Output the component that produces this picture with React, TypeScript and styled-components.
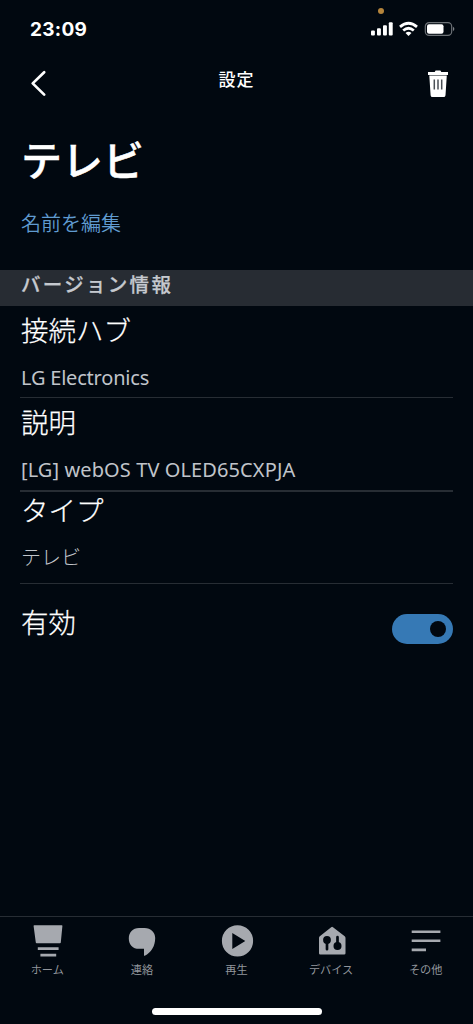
import React from "react";
import styled, { createGlobalStyle } from "styled-components";

const Global = createGlobalStyle`
  *, *::before, *::after { box-sizing: border-box; }
  html, body { margin: 0; background: #010810; }
  body { font-family: "Noto Sans CJK JP", "Noto Sans", sans-serif; color: #fff; }
`;

const Screen = styled.div`
  position: relative;
  display: flex;
  flex-direction: column;
  width: 473px;
  height: 1024px;
  overflow: hidden;
  background: #010810;
`;

const StatusBar = styled.div`
  display: flex;
  align-items: center;
  justify-content: space-between;
  height: 58px;
  padding: 0 18px 0 30px;
`;

const Clock = styled.span`
  padding-top: 2px;
  font: 700 19px/22px Inter, sans-serif;
  letter-spacing: 0.3px;
`;

const StatusIcons = styled.div`
  display: flex;
  align-items: center;
  height: 16px;
`;

const RecordingDot = styled.i`
  position: absolute;
  left: 378px;
  top: 8px;
  width: 6px;
  height: 6px;
  border-radius: 50%;
  background: #b5853c;
`;

const NavBar = styled.header`
  display: grid;
  grid-template-columns: 60px 1fr 60px;
  height: 62px;
`;

const NavButton = styled.button<{ $end?: boolean }>`
  display: flex;
  align-items: flex-start;
  justify-content: ${(p) => (p.$end ? "flex-end" : "flex-start")};
  padding: ${(p) => (p.$end ? "12px 24px 0 0" : "12px 0 0 30px")};
  border: 0;
  background: none;
`;

const NavTitle = styled.h2`
  margin: 0;
  padding-top: 10px;
  text-align: center;
  font-size: 17px;
  font-weight: 500;
  line-height: 22px;
  letter-spacing: 1px;
`;

const DeviceName = styled.h1`
  margin: 8px 0 0 21px;
  font-size: 41px;
  font-weight: 500;
  line-height: 60px;
  -webkit-text-stroke: 0.5px #fff;
`;

const EditLink = styled.a`
  margin: 21px 0 0 21px;
  font-size: 20px;
  font-weight: 350;
  line-height: 28px;
  color: #609bd0;
`;

const SectionHeader = styled.div`
  height: 36px;
  margin-top: 33px;
  padding-left: 21px;
  background: #272c33;
  color: #c5c9cf;
  font-size: 19.5px;
  font-weight: 500;
  line-height: 27px;
  letter-spacing: 2.3px;
  -webkit-text-stroke: 0.25px #c5c9cf;
`;

const Row = styled.div<{ $height: number; $top: number; $line?: number }>`
  height: ${(p) => p.$height}px;
  margin: 0 20px;
  padding: ${(p) => p.$top}px 0 0 1px;
  border-bottom: ${(p) => p.$line ?? 1}px solid #272d34;
`;

const Label = styled.div<{ $tight?: boolean }>`
  font-size: 27.5px;
  font-weight: 300;
  line-height: ${(p) => (p.$tight ? 34 : 36)}px;
  color: #fff;
  -webkit-text-stroke: 0.25px #fff;
`;

const Value = styled.div<{ $latin?: boolean; $tracking?: number }>`
  margin-top: 16px;
  font-family: ${(p) => (p.$latin ? '"Noto Sans", sans-serif' : '"Noto Sans CJK JP", sans-serif')};
  font-size: 20px;
  font-weight: ${(p) => (p.$latin ? 400 : 300)};
  letter-spacing: ${(p) => p.$tracking ?? 0}px;
  line-height: 30px;
  white-space: nowrap;
  color: #c0c4ca;
`;

const ToggleRow = styled.div`
  display: flex;
  justify-content: space-between;
  margin: 19px 20px 0 21px;
`;

const Toggle = styled.button`
  display: flex;
  align-items: center;
  justify-content: flex-end;
  width: 61px;
  height: 30px;
  margin-top: 11px;
  padding: 0 7px;
  border: 0;
  border-radius: 15px;
  background: #3679b5;
`;

const Knob = styled.span`
  width: 16px;
  height: 16px;
  border-radius: 50%;
  background: #010810;
`;

const TabBar = styled.nav`
  display: grid;
  grid-template-columns: repeat(5, 1fr);
  height: 92px;
  margin-top: auto;
  border-top: 1px solid #272d34;
`;

const Tab = styled.a`
  display: flex;
  flex-direction: column;
  align-items: center;
  padding-top: 7px;
  color: #a6a9af;

  svg {
    margin-left: 2px;
  }
`;

const TabLabel = styled.span`
  margin-top: 2px;
  font-size: 11.2px;
  font-weight: 400;
  line-height: 18px;
  color: #92969c;
`;

const HomeIndicator = styled.div`
  align-self: center;
  width: 170px;
  height: 7px;
  margin-bottom: 9px;
  border-radius: 4px;
  background: #fff;
`;

const tabs = [
  {
    name: "ホーム",
    art: <path d="M3.2 1.2h27.6q.7 0 .6.8l-1.6 16.600q-.1.700-.8.700H5.600q-.7 0-.8-.7L2.600 2q-.1-.8.600-.8zM6.800 23.200h20.800v2.700H6.800zM9.400 29.800h15.800v2.700H9.400z" />,
  },
  {
    name: "連絡",
    art: <path d="M14 3.900h5.500c6.500 0 10.700 4.300 10.700 10.200 0 8.200-4.200 14.800-10.400 17.600q-.8.300-.8-.5v-6.400h-5C7.800 24.800 3.800 20.600 3.800 14.400S7.800 3.900 14 3.900z" />,
  },
  {
    name: "再生",
    art: <path fillRule="evenodd" d="M17.500 1.300a15.600 15.600 0 1 1 0 31.200 15.600 15.600 0 0 1 0-31.200zM12.300 9v16l13-8z" />,
  },
  {
    name: "デバイス",
    art: (
      <>
        <path d="M16.200 3.200q.9-.7 1.800 0l11.700 9.100q.8.700.8 1.700v15.200q0 1.300-1.300 1.300H5.300Q4 30.500 4 29.200V14q0-1 .8-1.700z" />
        <g stroke="#010810" strokeWidth="2.700" strokeLinecap="round">
          <path d="M12 16v9.200M22.500 13.200V22" />
        </g>
        <circle cx="12" cy="16" r="3.900" fill="#010810" />
        <circle cx="22.500" cy="22" r="4" fill="#010810" />
      </>
    ),
  },
  {
    name: "その他",
    art: <path d="M2.700 6.400h28.700v2.700H2.700zM2.700 15.400h28.700v2.700H2.700zM2.700 24.500h14.300v2.700H2.700z" />,
  },
];

export default function App() {
  return (
    <Screen>
      <Global />
      <RecordingDot />
      <StatusBar>
        <Clock>23:09</Clock>
        <StatusIcons>
          <svg width="84" height="16" viewBox="0 0 84 16" fill="#fff">
            <rect x="0" y="9.500" width="3.900" height="5" rx="1" />
            <rect x="6" y="7.200" width="3.900" height="7.300" rx="1" />
            <rect x="12" y="4.300" width="3.900" height="10.200" rx="1" />
            <rect x="17.800" y="1.200" width="3.900" height="13.300" rx="1" />
            <g fill="none" stroke="#fff" strokeWidth="2.800">
              <path d="M29 5.800q8.500-7 17 0" />
              <path d="M32.200 9.500q5.300-4.400 10.600 0" />
            </g>
            <path d="M34.500 12q3-2.600 6 0l-3 3z" />
            <rect x="54.300" y="1.600" width="26.400" height="12.800" rx="3.800" fill="none" stroke="#6c7176" strokeWidth="1.200" />
            <rect x="56" y="3.300" width="16.500" height="9.400" rx="2" />
            <path d="M82 5.800q2.800 2.200 0 4.400z" fill="#7c8085" />
          </svg>
        </StatusIcons>
      </StatusBar>
      <NavBar>
        <NavButton aria-label="戻る">
          <svg width="18" height="27" viewBox="0 0 18 27" fill="none" stroke="#fff" strokeWidth="2.700" strokeLinecap="round" strokeLinejoin="round">
            <path d="M14.200 2.200L2.700 13.400l11.500 11.200" />
          </svg>
        </NavButton>
        <NavTitle>設定</NavTitle>
        <NavButton $end aria-label="削除">
          <svg width="22" height="28" viewBox="0 0 22 28" fill="#fff">
            <path d="M1 2h6.700L8.600.600h4.800L14.300 2H21v2.900H1z" />
            <path d="M2.300 5.500h17.500l-1.300 19.700q-.1 1.900-1.900 1.900H5.500q-1.800 0-1.900-1.900z" />
            <path d="M7.300 9.500v10M11 9.500v10M14.700 9.500v10" stroke="#4a4f55" strokeWidth="1.500" />
          </svg>
        </NavButton>
      </NavBar>
      <DeviceName>テレビ</DeviceName>
      <EditLink>名前を編集</EditLink>
      <SectionHeader>バージョン情報</SectionHeader>
      <Row $height={92} $top={5}>
        <Label>接続ハブ</Label>
        <Value $latin $tracking={-0.2}>LG Electronics</Value>
      </Row>
      <Row $height={94} $top={5} $line={2}>
        <Label>説明</Label>
        <Value $latin $tracking={0.1}>[LG] webOS TV OLED65CXPJA</Value>
      </Row>
      <Row $height={92} $top={0}>
        <Label $tight>タイプ</Label>
        <Value>テレビ</Value>
      </Row>
      <ToggleRow>
        <Label>有効</Label>
        <Toggle role="switch" aria-checked="true" aria-label="有効">
          <Knob />
        </Toggle>
      </ToggleRow>
      <TabBar>
        {tabs.map((tab) => (
          <Tab key={tab.name}>
            <svg width="35" height="34" viewBox="0 0 35 34" fill="currentColor">
              {tab.art}
            </svg>
            <TabLabel>{tab.name}</TabLabel>
          </Tab>
        ))}
      </TabBar>
      <HomeIndicator />
    </Screen>
  );
}
